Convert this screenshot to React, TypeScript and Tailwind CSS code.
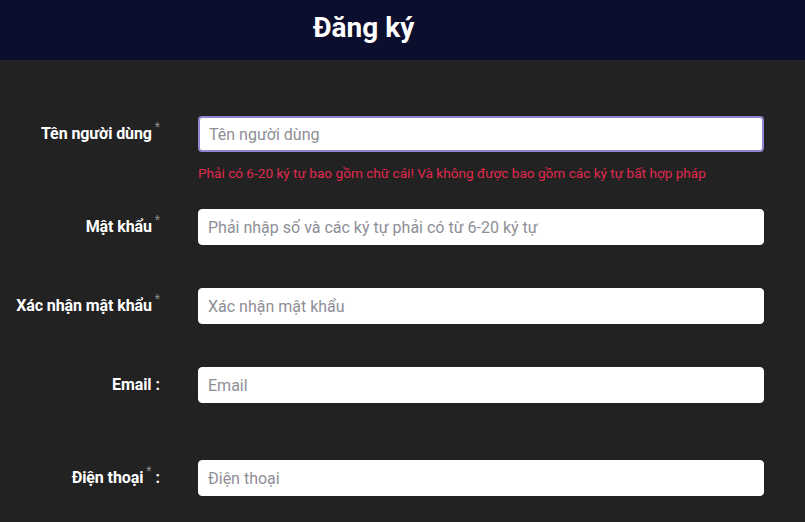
import React from "react";

const FIELDS = [
  { label: "Tên người dùng", placeholder: "Tên người dùng", star: true, colon: false, error: "Phải có 6-20 ký tự bao gồm chữ cái! Và không được bao gồm các ký tự bất hợp pháp", focus: true, gap: "mb-0" },
  { label: "Mật khẩu", placeholder: "Phải nhập số và các ký tự phải có từ 6-20 ký tự", star: true, colon: false, gap: "mb-[43px]" },
  { label: "Xác nhận mật khẩu", placeholder: "Xác nhận mật khẩu", star: true, colon: false, gap: "mb-[43px]" },
  { label: "Email", placeholder: "Email", star: false, colon: true, gap: "mb-[57px]" },
  { label: "Điện thoại", placeholder: "Điện thoại", star: true, colon: true, gap: "mb-[26px]" },
];

export default function App() {
  return (
    <div className="w-[805px] h-[522px] bg-[#222222] font-['Roboto',sans-serif] overflow-hidden">
      {/* Header */}
      <div className="h-[60px] bg-[#0c0e2e] flex items-center pl-[313px]">
        <h1 className="text-white text-[28px] font-bold leading-none -mt-[4px]">
          Đăng ký
        </h1>
      </div>

      {/* Form */}
      <div className="pt-[56px]">
        {FIELDS.map((f) => (
          <div key={f.label} className={`flex items-start ${f.gap}`}>
            <div className="w-[198px] h-[36px] flex items-center justify-end pr-[38px] shrink-0">
              <span className="text-white text-[16px] font-bold tracking-[-0.1px]">{f.label}</span>
              {f.star && (
                <span className="text-[#8a8a8a] text-[12px] self-start mt-[2px] ml-[3px]">*</span>
              )}
              {f.colon && (
                <span className="text-white text-[16px] font-bold ml-[4px]">:</span>
              )}
            </div>
            <div className="w-[566px]">
              <input
                type="text"
                placeholder={f.placeholder}
                className={`w-full h-[36px] rounded-[4px] bg-white px-[9px] text-[16px] text-gray-800 placeholder:text-[#8e8e96] outline-none ${
                  f.focus ? "border-2 border-[#8f86cf] px-[7px]" : "border border-white"
                }`}
              />
              {f.error && (
                <div className="h-[57px] pt-[15px]">
                  <p className="text-[13.6px] text-[#e0294f] leading-none">
                    {f.error}
                  </p>
                </div>
              )}
            </div>
          </div>
        ))}
      </div>
    </div>
  );
}
